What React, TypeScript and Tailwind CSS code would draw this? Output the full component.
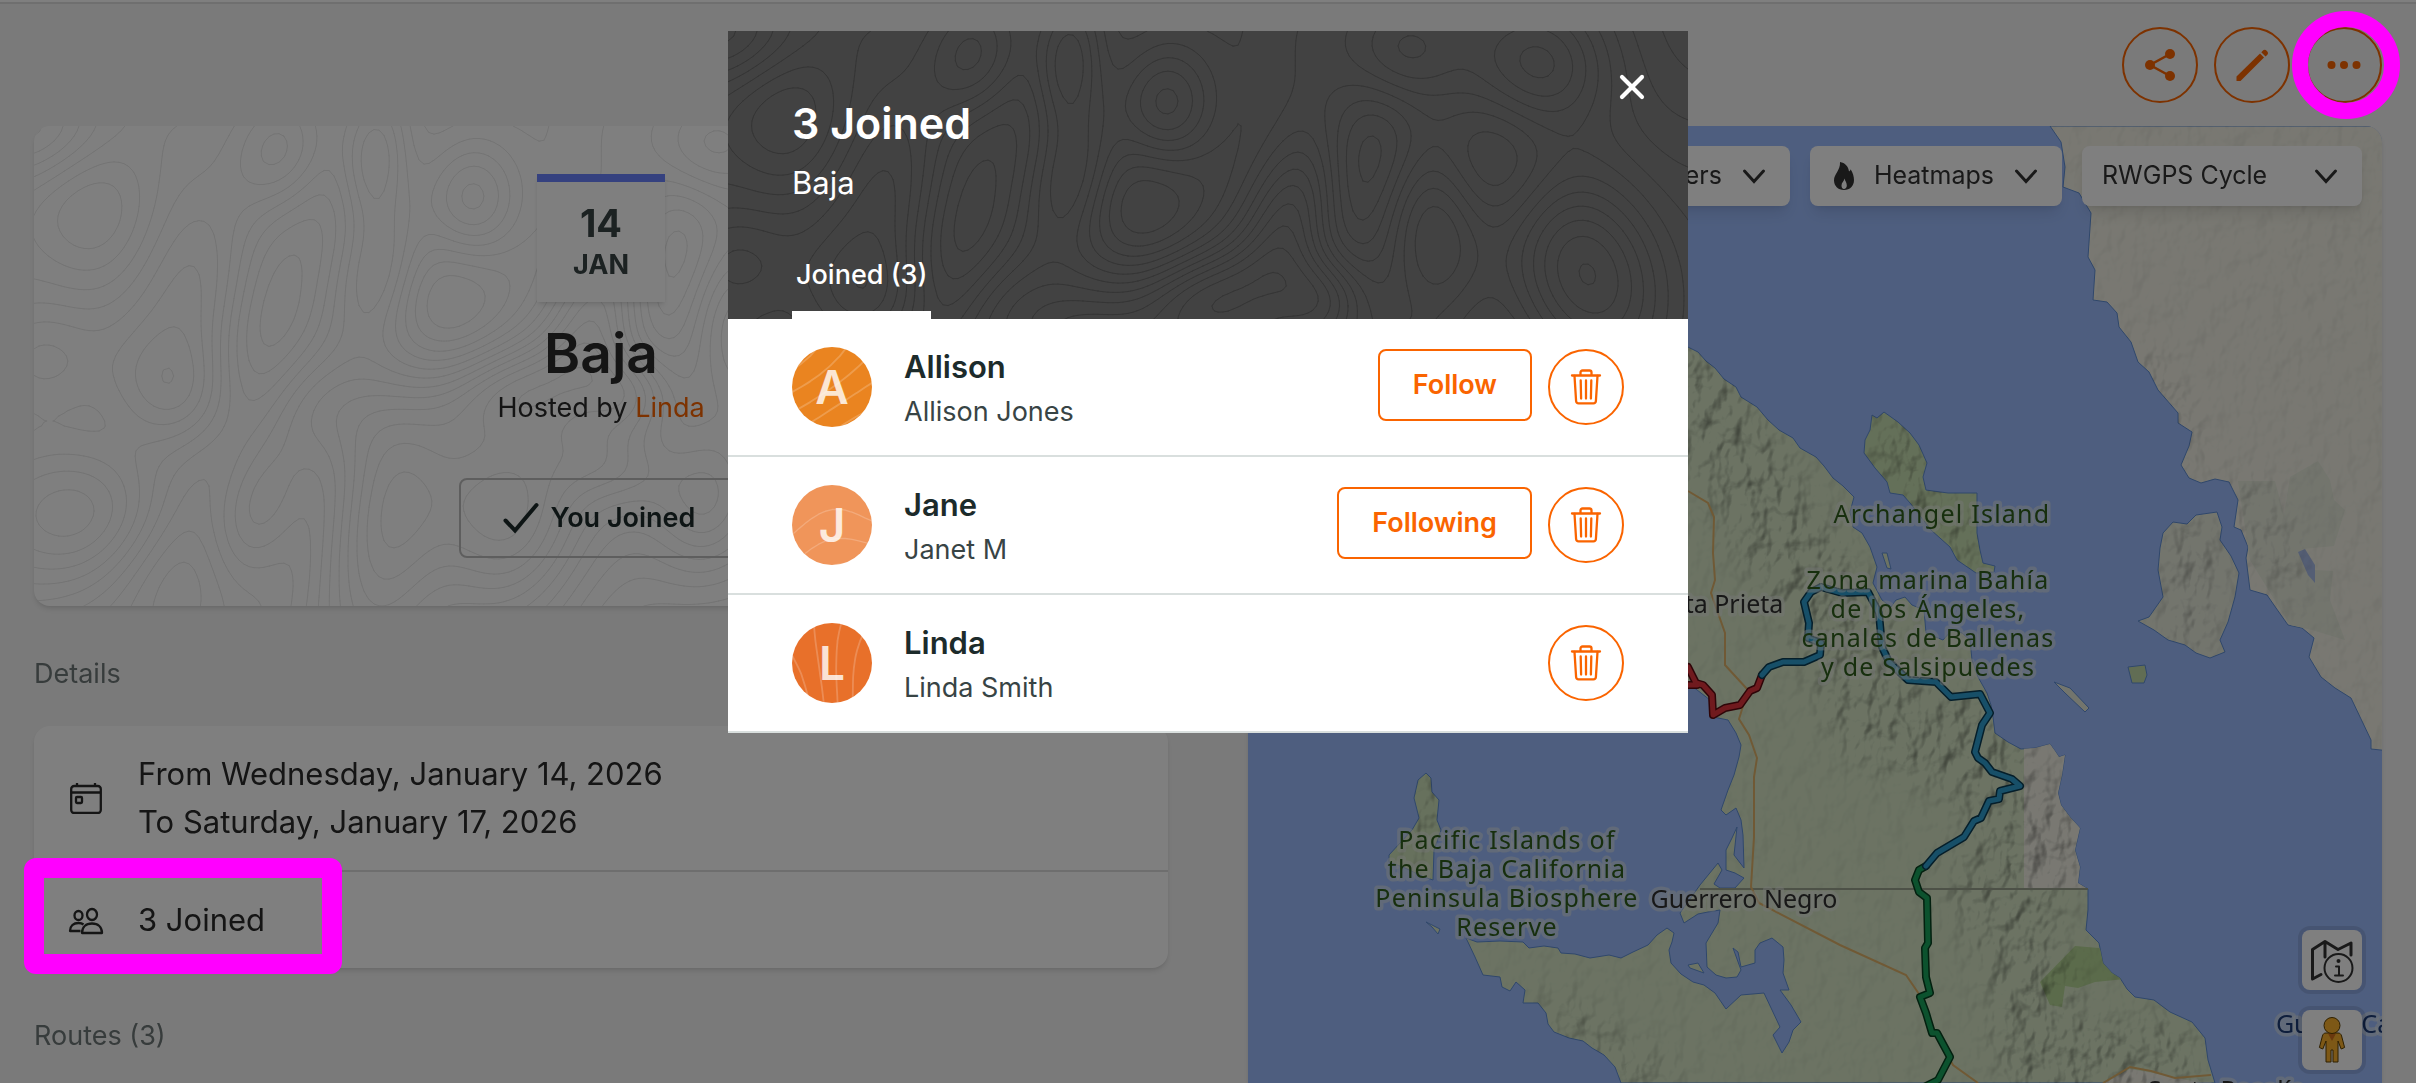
import { useId } from "react";
import { X } from "lucide-react";

type Member = {
  name: string;
  fullName: string;
  avatar: string;
  shift: string;
  follow?: string;
};

const members: Member[] = [
  { name: "Allison", fullName: "Allison Jones", avatar: "bg-[#ea8420]", shift: "10 10 44 44", follow: "Follow" },
  { name: "Jane", fullName: "Janet M", avatar: "bg-[#f0955a]", shift: "380 400 60 60", follow: "Following" },
  { name: "Linda", fullName: "Linda Smith", avatar: "bg-[#e8702a]", shift: "585 90 44 44" },
];

// x, y, radius x, radius y, tilt (degrees), height
const peaks = [
  [0, 0, 60, 50, 0, 1.1],
  [247, 27, 38, 48, 15, 0.75],
  [341, 32, 28, 55, 5, 0.95],
  [437, 74, 40, 50, 0, 1],
  [674, 24, 40, 48, 25, 0.7],
  [817, 33, 52, 50, 0, 0.7],
  [344, 145, 34, 60, 15, 0.8],
  [566, 187, 38, 75, 18, 1.1],
  [707, 198, 40, 75, -5, 0.9],
  [480, 262, 55, 34, -15, 0.7],
  [595, 268, 34, 34, 0, 0.8],
  [857, 246, 65, 90, -25, 1.6],
  [148, 163, 62, 90, -8, 0.75],
  [141, 270, 55, 46, 30, 0.7],
  [288, 280, 50, 45, 20, 0.5],
  [57, 386, 75, 60, 0, 0.9],
  [225, 378, 36, 75, 20, 0.9],
  [350, 390, 52, 110, 8, 1.4],
  [470, 395, 60, 80, 0, 1.2],
  [576, 339, 50, 32, 20, 0.5],
  [675, 377, 40, 60, 10, 0.7],
  [5, 235, 50, 45, 0, 0.5],
  [70, 90, 60, 90, -35, -0.9],
  [230, 200, 40, 90, 10, -0.6],
  [640, 110, 45, 110, 20, -0.8],
  [760, 130, 60, 60, 0, -0.6],
  [410, 190, 50, 60, 30, -0.5],
  [150, 450, 60, 60, 0, -0.5],
].map(([x, y, rx, ry, tilt, h]) => {
  const a = (tilt * Math.PI) / 180;
  return { x, y, rx, ry, h, c: Math.cos(a), s: Math.sin(a) };
});

const heightAt = (x: number, y: number) => {
  let z = 0.25 * Math.sin(x / 90 + y / 160) + 0.15 * Math.sin(y / 55 - x / 130);
  for (const p of peaks) {
    const dx = x - p.x;
    const dy = y - p.y;
    const u = (dx * p.c + dy * p.s) / p.rx;
    const v = (dy * p.c - dx * p.s) / p.ry;
    z += p.h * Math.exp(-(u * u + v * v) / 1.6);
  }
  return z;
};

// marching squares over the height field
const buildContours = (width: number, height: number, cell: number) => {
  const cols = Math.ceil(width / cell);
  const rows = Math.ceil(height / cell);
  const z: number[][] = [];
  for (let j = 0; j <= rows; j++) {
    z.push([]);
    for (let i = 0; i <= cols; i++) z[j].push(heightAt(i * cell, j * cell));
  }
  let d = "";
  for (let level = -1.2; level < 2; level += 0.15) {
    for (let j = 0; j < rows; j++) {
      for (let i = 0; i < cols; i++) {
        const corners = [
          [i, j, z[j][i]],
          [i + 1, j, z[j][i + 1]],
          [i + 1, j + 1, z[j + 1][i + 1]],
          [i, j + 1, z[j + 1][i]],
        ];
        const hits: string[] = [];
        for (let k = 0; k < 4; k++) {
          const [ax, ay, az] = corners[k];
          const [bx, by, bz] = corners[(k + 1) % 4];
          if (az > level !== bz > level) {
            const t = (level - az) / (bz - az);
            hits.push(`${((ax + (bx - ax) * t) * cell).toFixed(1)} ${((ay + (by - ay) * t) * cell).toFixed(1)}`);
          }
        }
        for (let k = 0; k + 1 < hits.length; k += 2) d += `M${hits[k]}L${hits[k + 1]}`;
      }
    }
  }
  return d;
};

const contourPath = buildContours(1160, 480, 5);

const Contours = ({ className, viewBox }: { className: string; viewBox?: string }) => (
  <svg className={`pointer-events-none absolute inset-0 h-full w-full ${className}`} viewBox={viewBox} fill="none" aria-hidden="true">
    <path d={contourPath} stroke="currentColor" strokeLinecap="round" />
  </svg>
);

const ShareIcon = () => (
  <svg className="h-8 w-8" viewBox="0 0 32 32" fill="currentColor" aria-hidden="true">
    <path d="M26 5 6 16l20 11" fill="none" stroke="currentColor" strokeWidth="2.500" />
    <circle cx="6" cy="16" r="5" />
    <circle cx="26" cy="5" r="5" />
    <circle cx="26" cy="27" r="5" />
  </svg>
);

const PencilIcon = () => (
  <svg className="h-9 w-9" viewBox="0 0 36 36" fill="currentColor" aria-hidden="true">
    <path d="M2.500 29.500 26 6.500l4 4L6.500 34H2.500z" />
    <path d="M27.300 5.300l1.200-1.400a3.100 3.100 0 0 1 4.400 4.400l-1.400 1.200z" />
  </svg>
);

const DotsIcon = () => (
  <svg className="h-9 w-9" viewBox="0 0 36 36" fill="currentColor" aria-hidden="true">
    <circle cx="5.500" cy="18" r="4" />
    <circle cx="18" cy="18" r="4" />
    <circle cx="30.500" cy="18" r="4" />
  </svg>
);

const CheckIcon = () => (
  <svg className="h-8 w-9" viewBox="0 0 36 32" fill="none" stroke="currentColor" strokeWidth="4" strokeLinecap="round" aria-hidden="true">
    <path d="M2.500 18.500 12 28.500 33.500 3" />
  </svg>
);

const Chevron = ({ className = "" }: { className?: string }) => (
  <svg className={`h-6 w-6 ${className}`} viewBox="0 0 24 24" fill="none" stroke="currentColor" strokeWidth="3" strokeLinecap="round" aria-hidden="true">
    <path d="M2.500 7 12 17.500 21.500 7" />
  </svg>
);

const TrashIcon = () => (
  <svg className="h-9 w-8" viewBox="0 0 32 36" fill="none" stroke="currentColor" strokeWidth="2.300" strokeLinecap="round" strokeLinejoin="round" aria-hidden="true">
    <path d="M2 6.500h28M10.500 6V3.500a2 2 0 0 1 2-2h7a2 2 0 0 1 2 2V6" />
    <path d="M4.500 7l1.600 25a2.500 2.500 0 0 0 2.500 2.300h14.800a2.500 2.500 0 0 0 2.500-2.300L27.500 7" />
    <path d="M10.700 11.500l.4 18M16 11.500v18M21.300 11.500l-.4 18" />
  </svg>
);

const CalendarIcon = () => (
  <svg className="h-8 w-8 shrink-0" viewBox="0 0 32 32" fill="none" stroke="currentColor" strokeWidth="2.300" aria-hidden="true">
    <rect x="1.200" y="4" width="29.600" height="27" rx="3" />
    <path d="M1 10.500h30M7 1v3M25 1v3" />
    <rect x="6" y="15" width="6" height="6" rx="1" />
  </svg>
);

const PeopleIcon = () => (
  <svg className="h-8 w-8 shrink-0 overflow-visible" viewBox="0 0 32 32" fill="none" stroke="currentColor" strokeWidth="2.300" strokeLinejoin="round" aria-hidden="true">
    <ellipse cx="22" cy="10.500" rx="5" ry="5.500" />
    <ellipse cx="8.500" cy="11.500" rx="4" ry="4.500" />
    <path d="M12 29c0-6 4-9.500 10-9.500S32 23 32 29z" />
    <path d="M10.500 27H0c0-5 3.500-8 8.500-8 2 0 3.800.5 5 1.500" />
  </svg>
);

const FlameIcon = () => (
  <svg className="h-7 w-5" viewBox="0 0 20 28" fill="currentColor" aria-hidden="true">
    <path
      fillRule="evenodd"
      d="M6 0c5 .8 8.500 4.500 9 9.500 1-.6 1.400-1.300 1.600-2.300C19 11 20 14.500 20 18c0 6-4 10-10 10S0 24 0 18.300C0 12 6.500 8.500 6 0zm4.500 16.500C10 19.500 7.500 20.500 7.500 23.500c0 2 1 3.500 2.500 3.500s2.800-1.400 2.800-3.500c0-3-1.800-4.500-2.300-7z"
    />
  </svg>
);

const MapInfoIcon = () => (
  <svg className="h-12 w-12" viewBox="0 0 48 48" fill="none" stroke="currentColor" strokeWidth="3" strokeLinecap="round" strokeLinejoin="round" aria-hidden="true">
    <path d="M13 38.500 4.500 43V13.500L17 5.500l13 8 13-6.500v12M17 6v15" />
    <circle cx="30.500" cy="32" r="14" strokeWidth="2" />
    <circle cx="30.500" cy="25" r="2" fill="currentColor" stroke="none" />
    <path d="M28 30.500h3V39M27 39.500h8" strokeWidth="2" />
  </svg>
);

const PegmanIcon = () => (
  <svg className="h-12 w-8" viewBox="0 0 32 48" stroke="#5c3f00" strokeWidth="1" strokeLinejoin="round" aria-hidden="true">
    <path fill="#fbb12c" d="M10 17h12c2 0 3 1 3.600 3l3 11.500-3.400 1.500-3.200-8V46h-5V34h-2v12h-5V25l-3.200 8-3.400-1.500 3-11.500c.6-2 1.600-3 3.600-3z" />
    <path fill="#d4701c" stroke="none" d="M12 17.500h8L16 25z" />
    <circle cx="16" cy="9.500" r="8" fill="#fbb12c" />
  </svg>
);

const bajaShape =
  "M1640 320 1688 347 1698 352 1706 361 1715 368 1724 379 1736 387 1741 397 1757 407 1768 420 1779 430 1793 438 1800 448 1816 457 1824 466 1833 478 1843 486 1854 497 1850 512 1853 527 1862 533 1870 547 1877 567 1873 583 1882 600 1891 607 1896 600 1905 597 1912 605 1924 610 1926 633 1943 640 1952 630 1962 633 1970 640 1972 660 1978 677 1987 693 1991 705 1993 717 1995 733 2008 742 2021 749 2035 748 2050 744 2055 751 2059 757 2065 755 2062 775 2058 793 2061 805 2070 817 2080 828 2075 850 2080 867 2078 883 2088 889 2088 910 2086 930 2099 943 2103 963 2112 973 2120 978 2127 989 2135 997 2154 1000 2170 1012 2192 1022 2205 1038 2208 1060 2215 1083H1621L1615 1067 1604 1055 1592 1048 1583 1041 1569 1038 1554 1032 1548 1024 1546 1013 1538 1003 1523 1003 1525 990 1516 982 1510 991 1502 987 1500 977 1483 975 1475 957 1466 938 1477 942 1500 941 1523 942 1529 948 1544 946 1558 948 1561 953 1575 954 1590 958 1609 955 1621 958 1633 952 1648 945 1657 935 1667 928 1674 933 1672 942 1669 950 1671 963 1681 974 1693 982 1704 985 1715 993 1726 1009 1741 995 1764 993 1772 1010 1780 1027 1773 1035 1782 1053 1789 1042 1793 1030 1801 1022 1791 1005 1780 990 1789 990 1783 973 1784 960 1783 947 1772 938 1760 943 1755 950 1755 963 1741 967 1738 952 1733 948 1741 970 1737 977 1726 978 1716 975 1707 967 1706 943 1718 923 1720 910 1708 912 1698 914 1684 923 1680 913 1700 885 1718 863 1722 870 1714 884 1720 888 1735 888 1744 878 1735 873 1726 870 1726 850 1732 838 1737 827 1734 855 1744 868 1743 835 1741 820 1736 808 1726 815 1721 810 1728 790 1734 775 1739 757 1741 745 1736 733 1728 720 1713 717 1710 700 1701 693 1688 683 1640 660Z";
const sonoraShape =
  "M2050 126 2061 142 2065 167 2063 187 2079 193 2091 213 2088 257 2095 270 2093 300 2107 302 2117 313 2119 327 2131 342 2138 362 2149 372 2158 390 2178 413 2178 423 2192 432 2189 446 2181 465 2189 478 2201 483 2215 479 2229 482 2238 500 2234 527 2241 530 2248 547 2246 558 2250 590 2267 595 2276 608 2288 625 2302 628 2314 638 2309 657 2321 677 2335 688 2351 698 2361 719 2371 740V749L2390 751V126Z";
const tiburonShape =
  "M2173 522 2187 524 2196 515 2217 512 2222 527 2220 540 2231 556 2239 573 2235 597 2228 622 2220 640 2225 652 2210 658 2196 653 2185 645 2168 640 2154 630 2138 621 2149 617 2163 597 2158 570 2160 548 2163 533Z";
const archangelShape =
  "M1872 415 1877 418 1884 412 1898 422 1910 433 1919 445 1927 463 1923 477 1926 490 1948 493 1977 493 1977 533 1980 550 1983 563 1995 566 1994 572 1976 573 1957 560 1950 547 1931 530 1910 503 1903 495 1890 493 1887 482 1875 468 1864 453 1865 440 1870 430Z";
const cedrosShape =
  "M1426 773 1431 778 1432 792 1439 800 1437 820 1441 830 1434 850 1433 880 1424 877 1405 868 1389 862V855L1412 830 1419 818 1414 798 1418 780Z";

const redRoute = "M1688 667 1696 683 1703 685 1712 695 1713 715 1725 708 1740 705 1750 691 1757 688 1762 675M1688 685H1697";
const blueRoute =
  "M1762 675 1769 667 1783 662H1804L1820 655 1821 643 1808 638 1809 623 1804 602 1811 592 1821 587 1842 593 1868 592 1879 613 1882 647 1889 662 1908 680 1936 682 1951 697 1980 694 1990 713 1982 725 1975 752 1978 758 1985 763 1992 772 2012 779 2020 786 2000 791 1999 799 1989 801 1981 818 1974 821 1964 837 1937 853 1926 866";
const greenRoute =
  "M1926 866 1919 870 1915 880 1919 892 1927 898 1928 943 1925 948 1926 977 1930 993 1920 997 1926 1013 1932 1033H1937L1950 1057 1938 1080 1926 1086";

const Route = ({ d, edge, fill }: { d: string; edge: string; fill: string }) => (
  <g fill="none" strokeLinejoin="round" strokeLinecap="round">
    <path d={d} stroke={edge} strokeWidth="8" />
    <path d={d} stroke={fill} strokeWidth="5" />
  </g>
);

const MapLabel = ({ x, y, lines, className = "" }: { x: number; y: number; lines: string[]; className?: string }) => (
  <text
    x={x}
    y={y}
    textAnchor="middle"
    stroke="#e8ebe8"
    strokeOpacity="0.5"
    strokeWidth="7"
    strokeLinejoin="round"
    paintOrder="stroke"
    className={`font-['Noto_Sans',sans-serif] text-[25px] ${className}`}
  >
    {lines.map((line, i) => (
      <tspan key={line} x={x} dy={i === 0 ? 0 : 29}>
        {line}
      </tspan>
    ))}
  </text>
);

const RouteMap = () => {
  const id = useId();
  return (
    <svg className="absolute inset-0 h-full w-full" viewBox="1248 126 1134 957" preserveAspectRatio="xMidYMin slice" role="img" aria-label="Route map">
      <defs>
        <clipPath id={`${id}land`}>
          <path d={bajaShape} />
          <path d={sonoraShape} />
          <path d={tiburonShape} />
          <path d={archangelShape} />
          <path d={cedrosShape} />
        </clipPath>
        <clipPath id={`${id}baja`}>
          <path d={bajaShape} />
        </clipPath>
        <filter id={`${id}relief`} x="0" y="0" width="100%" height="100%" colorInterpolationFilters="sRGB">
          <feTurbulence type="fractalNoise" baseFrequency="0.05 0.035" numOctaves="3" seed="8" />
          <feColorMatrix values="0 0 0 0 0  0 0 0 0 0  0 0 0 0 0  1 0 0 0 0" />
          <feDiffuseLighting surfaceScale="7" diffuseConstant="1.180" lightingColor="#ffffff">
            <feDistantLight azimuth="225" elevation="58" />
          </feDiffuseLighting>
        </filter>
        <filter id={`${id}soft`}>
          <feGaussianBlur stdDeviation="18" />
        </filter>
        <mask id={`${id}hills`} maskUnits="userSpaceOnUse" x="1248" y="126" width="1134" height="957">
          <rect x="1248" y="126" width="1134" height="957" fill="#121212" />
          <g fill="none" stroke="#8c8c8c" strokeLinecap="round" filter={`url(#${id}soft)`}>
            <path d="M1690 380 1760 500 1840 620 1880 720 1960 740 2060 850" strokeWidth="90" />
            <path d="M1990 880 2030 960 2040 1060 2160 1060" strokeWidth="80" />
            <path d="M1560 1010 1600 1050 1660 1075" strokeWidth="30" />
            <path d="M1890 440 1915 490 1960 545" strokeWidth="50" />
            <path d="M1430 790V850M2195 540 2190 630" strokeWidth="36" />
            <path d="M2140 360 2185 450M2245 490 2285 580" strokeWidth="22" />
          </g>
        </mask>
      </defs>
      <rect x="1248" y="126" width="1134" height="957" fill="#9dbdfe" />
      <g stroke="#5f8fd8" strokeWidth="1" strokeLinejoin="round">
        <path d={bajaShape} fill="#d8e7c7" />
        <path d={sonoraShape} fill="#f2f1e5" />
        <path d={tiburonShape} fill="#e6eadb" />
        <path d={archangelShape} fill="#c9e0b2" />
        <path d={cedrosShape} fill="#cfe3bb" />
        <path d="M2128 667 2145 665 2147 675 2144 683 2132 683Z" fill="#c3dba9" />
        <path d="M2054 682 2070 688 2089 708 2085 712 2065 693Z" fill="#e6eadb" />
        <path d="M1426 922 1440 929 1438 934 1432 927ZM1882 553 1887 553 1891 569 1887 568ZM1688 965 1698 963 1704 973 1690 968Z" fill="#d8e7c7" />
      </g>
      <path d="M2238 481 2275 481 2284 515 2290 477 2318 461 2330 480 2334 500 2345 510 2334 546 2302 549 2314 570 2333 571 2330 600 2345 640 2312 630 2290 625 2250 560Z" fill="#e6eadb" />
      <path d="M2298 552 2305 549 2315 565 2315 583 2308 575Z" fill="#a9bce8" />
      <g clipPath={`url(#${id}baja)`}>
        <rect x="2024" y="740" width="80" height="149" fill="#f2f1e5" />
        <path d="M2075 946 2099 948 2120 970 2125 979 2095 982 2078 988 2065 986 2062 1007 2050 1005 2040 982Z" fill="#b6d696" />
        <path d="M2105 1083 2130 1069 2170 1076 2200 1083Z" fill="#f2f1e5" />
      </g>
      <g clipPath={`url(#${id}land)`} className="mix-blend-multiply">
        <g mask={`url(#${id}hills)`}>
          <rect x="1248" y="126" width="1134" height="957" filter={`url(#${id}relief)`} />
        </g>
      </g>
      <path d="M1700 889H2088" stroke="#9aa38f" strokeWidth="2" />
      <g fill="none" stroke="#e0b36a" strokeWidth="2">
        <path d="M1688 491 1708 503 1714 517 1713 553 1715 580 1711 593 1725 633V665L1748 690 1739 719 1749 735 1757 758 1754 777V837L1751 887 1759 903 1840 945 1906 975 1921 997 1934 1030 1953 1065 1978 1083" />
        <path d="M2103 1083 2130 1067 2151 1071 2175 1078 2211 1075" />
      </g>
      <Route d={redRoute} edge="#5c0a10" fill="#e0343c" />
      <Route d={greenRoute} edge="#06401f" fill="#18a45c" />
      <Route d={blueRoute} edge="#0a3c54" fill="#2e9fd0" />
      <MapLabel x={1942} y={523} lines={["Archangel Island"]} className="fill-[#2f5f1c] tracking-wider" />
      <MapLabel
        x={1928}
        y={589}
        lines={["Zona marina Bahía", "de los Ángeles,", "canales de Ballenas", "y de Salsipuedes"]}
        className="fill-[#2f5f1c] tracking-wider"
      />
      <MapLabel
        x={1507}
        y={849}
        lines={["Pacific Islands of", "the Baja California", "Peninsula Biosphere", "Reserve"]}
        className="fill-[#2f5f1c] tracking-wider"
      />
      <MapLabel x={1744} y={908} lines={["Guerrero Negro"]} className="fill-[#303030]" />
      <MapLabel x={1711} y={613} lines={["Punta Prieta"]} className="fill-[#303030]" />
      <MapLabel x={2375} y={1033} lines={["Gulf of California"]} className="fill-[#1c3c78]" />
      <MapLabel x={2226} y={1099} lines={["Santa Rosalía"]} className="fill-[#303030]" />
    </svg>
  );
};

const roundButton = "flex h-19 w-19 items-center justify-center rounded-full border-2 border-[#fa6400] text-[#fa6400]";
const mapButton = "flex h-15 items-center rounded-lg bg-white text-[25px] text-[#333] shadow-lg";
const outlineButton = "h-18 rounded-lg border-2 border-[#fa6400] px-[33px] text-[27px] font-semibold text-[#fa6400]";

const EventPage = () => (
  <div className="flex h-screen flex-col overflow-hidden bg-[#f5f5f5]">
    <div className="h-1 shrink-0 border-b-2 border-[#dedede] bg-white" />
    <header className="flex shrink-0 justify-end gap-4 px-[34px] py-[23px]">
      <button type="button" aria-label="Share" className={roundButton}>
        <ShareIcon />
      </button>
      <button type="button" aria-label="Edit" className={roundButton}>
        <PencilIcon />
      </button>
      <button type="button" aria-label="More" className={`relative ${roundButton}`}>
        <DotsIcon />
        <span className="absolute -inset-y-[18px] -right-5 -left-4 z-50 rounded-full border-16 border-[#ff00ff]" />
      </button>
    </header>

    <main className="grid min-h-0 flex-1 grid-cols-2 gap-20 px-[34px]">
      <div>
        <section className="relative flex h-120 flex-col items-center overflow-hidden rounded-2xl bg-white pt-12 shadow-md">
          <Contours className="text-[#e8e8e8]" />
          <div className="relative flex h-32 w-32 flex-col items-center justify-center border-t-8 border-[#6b82ff] bg-white pt-1 font-bold text-[#384445] shadow-md">
            <span className="text-[38px] leading-[42px]">14</span>
            <span className="text-[27px] leading-[42px]">JAN</span>
          </div>
          <h1 className="relative mt-4 text-[55px] leading-[70px] font-semibold text-[#2a2a2a]">Baja</h1>
          <p className="relative text-[27px] leading-10 text-[#2a2a2a]">
            Hosted by{" "}
            <a href="#linda" className="text-[#fa6400]">
              Linda
            </a>
          </p>
          <button
            type="button"
            className="relative mt-[50px] flex h-20 w-[284px] items-center justify-center gap-3 rounded-lg border-2 border-[#bdbdbd] pr-1 text-[27px] font-semibold text-[#1c2b2b]"
          >
            <CheckIcon />
            You Joined
          </button>
        </section>

        <h2 className="mt-12 mb-8 text-[27px] leading-10 text-[#6f7878]">Details</h2>
        <section className="rounded-2xl bg-white text-[31px] leading-12 text-[#2a2a2a] shadow-md">
          <div className="flex items-center gap-9 border-b-2 border-[#dcdcdc] px-9 py-6">
            <CalendarIcon />
            <p>
              From Wednesday, January 14, 2026
              <br />
              To Saturday, January 17, 2026
            </p>
          </div>
          <div className="relative flex items-center gap-9 px-9 py-6">
            <PeopleIcon />
            <p>3 Joined</p>
            <span className="absolute -top-3.5 -bottom-1.5 -left-2.5 z-50 w-[318px] rounded-xl border-20 border-[#ff00ff]" />
          </div>
        </section>
        <h2 className="mt-12 text-[27px] leading-10 text-[#6f7878]">Routes (3)</h2>
      </div>

      <section className="relative overflow-hidden rounded-t-2xl shadow-md">
        <RouteMap />
        <div className="relative flex justify-end gap-5 p-5">
          <button type="button" className={`${mapButton} gap-5 px-6`}>
            Layers
            <Chevron />
          </button>
          <button type="button" className={`${mapButton} gap-5 px-6`}>
            <FlameIcon />
            Heatmaps
            <Chevron />
          </button>
          <div className="relative">
            <select aria-label="Map style" className={`${mapButton} w-70 appearance-none px-5`}>
              <option>RWGPS Cycle</option>
            </select>
            <Chevron className="pointer-events-none absolute top-4.5 right-6 text-[#333]" />
          </div>
        </div>
        <div className="absolute right-5 bottom-[13px] flex flex-col gap-5">
          <button type="button" aria-label="Map legend" className="flex h-15 w-15 items-center justify-center rounded-lg bg-white text-[#333] ring-4 ring-black/10">
            <MapInfoIcon />
          </button>
          <button type="button" aria-label="Street view" className="flex h-15 w-15 items-center justify-center rounded-lg bg-white ring-4 ring-black/10">
            <PegmanIcon />
          </button>
        </div>
      </section>
    </main>
  </div>
);

const JoinedDialog = () => (
  <div className="fixed inset-0 z-40 flex items-start justify-center bg-black/50 pt-[31px]">
    <div role="dialog" aria-modal="true" aria-labelledby="joined-title" className="w-240 bg-white">
      <div className="relative overflow-hidden bg-[#424242] px-16 pt-16 text-white">
        <Contours className="text-[#353535]" />
        <button type="button" aria-label="Close" className="absolute top-9 right-9">
          <X className="h-10 w-10" strokeWidth={2.5} />
        </button>
        <h2 id="joined-title" className="relative text-[43px] leading-14 font-semibold">
          3 Joined
        </h2>
        <p className="relative mt-3 text-[31px] leading-10">Baja</p>
        <div role="tablist" className="relative mt-13 flex">
          <button type="button" role="tab" aria-selected="true" className="border-b-8 border-white px-1 pb-4 text-[27px] leading-10 font-medium">
            Joined (3)
          </button>
        </div>
      </div>
      <ul>
        {members.map((member) => (
          <li key={member.name} className="flex items-center border-b-2 border-[#d9dfde] px-16 py-[21px]">
            <div
              className={`relative flex h-20 w-20 items-center justify-center overflow-hidden rounded-full text-[46px] font-semibold text-white/80 ${member.avatar}`}
            >
              <Contours className="text-white/20" viewBox={member.shift} />
              <span className="relative">{member.name[0]}</span>
            </div>
            <div className="ml-8 flex-1 pt-1 leading-[45px]">
              <p className="text-[31px] font-semibold text-[#1c2b2b]">{member.name}</p>
              <p className="text-[27px] text-[#384445]">{member.fullName}</p>
            </div>
            <div className="flex items-start gap-4">
              {member.follow && (
                <button type="button" className={outlineButton}>
                  {member.follow}
                </button>
              )}
              <button type="button" aria-label={`Remove ${member.name}`} className={roundButton}>
                <TrashIcon />
              </button>
            </div>
          </li>
        ))}
      </ul>
    </div>
  </div>
);

const App = () => (
  <div className="font-[Inter,sans-serif]">
    <EventPage />
    <JoinedDialog />
  </div>
);

export default App;
